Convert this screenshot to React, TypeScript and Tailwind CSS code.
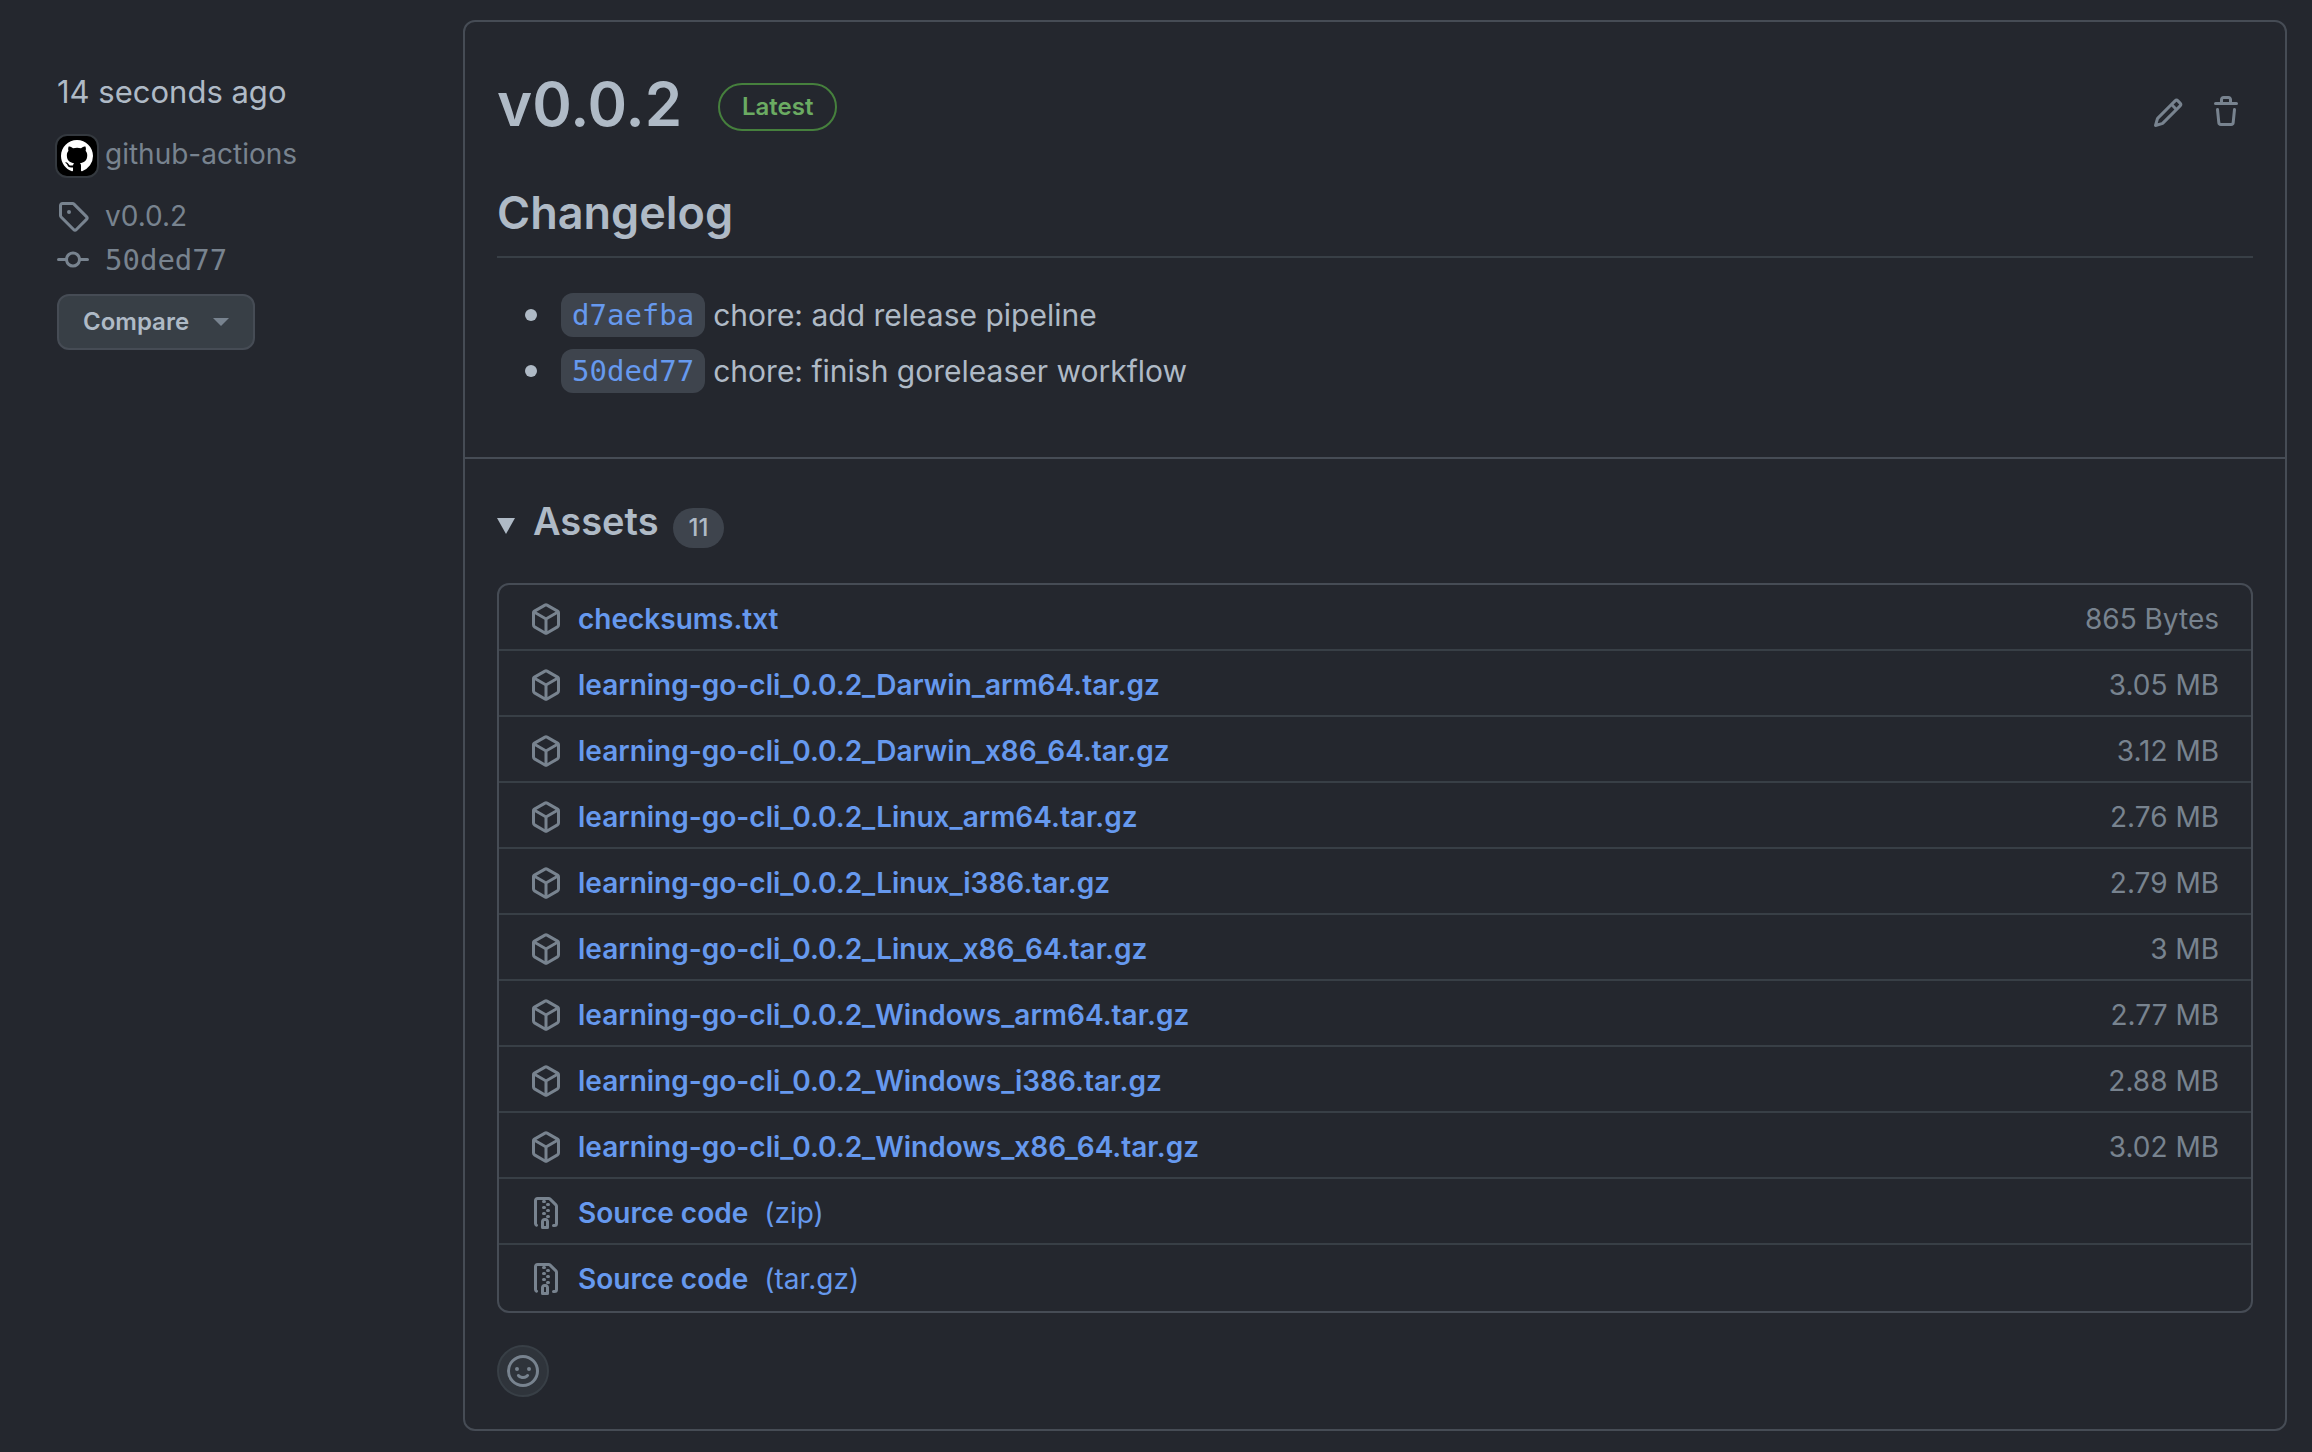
import type { ReactNode } from "react";

const icons = {
  tag: "M1 7.775V2.75C1 1.784 1.784 1 2.75 1h5.025c.464 0 .91.184 1.238.513l6.25 6.25a1.75 1.75 0 0 1 0 2.474l-5.026 5.026a1.75 1.75 0 0 1-2.474 0l-6.25-6.25A1.752 1.752 0 0 1 1 7.775Zm1.5 0c0 .066.026.13.073.177l6.25 6.25a.25.25 0 0 0 .354 0l5.025-5.025a.25.25 0 0 0 0-.354l-6.25-6.25a.25.25 0 0 0-.177-.073H2.75a.25.25 0 0 0-.25.25ZM6 5a1 1 0 1 1 0 2 1 1 0 0 1 0-2Z",
  commit:
    "M11.93 8.5a4.002 4.002 0 0 1-7.86 0H.75a.75.75 0 0 1 0-1.5h3.32a4.002 4.002 0 0 1 7.86 0h3.32a.75.75 0 0 1 0 1.5Zm-1.43-.75a2.5 2.5 0 1 0-5 0 2.5 2.5 0 0 0 5 0Z",
  pencil:
    "M11.013 1.427a1.75 1.75 0 0 1 2.474 0l1.086 1.086a1.75 1.75 0 0 1 0 2.474l-8.61 8.61c-.21.21-.47.364-.756.445l-3.251.93a.75.75 0 0 1-.927-.928l.929-3.25c.081-.286.235-.547.445-.758l8.61-8.61Zm.176 4.823L9.75 4.81l-6.286 6.287a.253.253 0 0 0-.064.108l-.558 1.953 1.953-.558a.253.253 0 0 0 .108-.064Zm1.238-3.763a.25.25 0 0 0-.354 0L10.811 3.75l1.439 1.44 1.263-1.263a.25.25 0 0 0 0-.354Z",
  trash:
    "M11 1.75V3h2.25a.75.75 0 0 1 0 1.5H2.75a.75.75 0 0 1 0-1.5H5V1.75C5 .784 5.784 0 6.75 0h2.5C10.216 0 11 .784 11 1.75ZM4.496 6.675l.66 6.6a.25.25 0 0 0 .249.225h5.19a.25.25 0 0 0 .249-.225l.66-6.6a.75.75 0 0 1 1.492.149l-.66 6.6A1.748 1.748 0 0 1 10.595 15h-5.19a1.75 1.75 0 0 1-1.741-1.575l-.66-6.6a.75.75 0 1 1 1.492-.15ZM6.5 1.75V3h3V1.75a.25.25 0 0 0-.25-.25h-2.5a.25.25 0 0 0-.25.25Z",
  package:
    "m8.878.392 5.25 3.045c.54.314.872.89.872 1.514v6.098a1.75 1.75 0 0 1-.872 1.514l-5.25 3.045a1.75 1.75 0 0 1-1.756 0l-5.25-3.045A1.75 1.75 0 0 1 1 11.049V4.951c0-.624.332-1.201.872-1.514L7.122.392a1.75 1.75 0 0 1 1.756 0ZM7.875 1.69l-4.63 2.685L8 7.133l4.755-2.758-4.63-2.685a.248.248 0 0 0-.25 0ZM2.5 5.677v5.372c0 .09.047.171.125.216l4.625 2.683V8.432Zm6.25 8.271 4.625-2.683a.25.25 0 0 0 .125-.216V5.677L8.75 8.432Z",
  zip: "M3.5 1.75v11.5c0 .09.048.173.126.217a.75.75 0 0 1-.752 1.298A1.748 1.748 0 0 1 2 13.25V1.75C2 .784 2.784 0 3.75 0h5.586c.464 0 .909.185 1.237.513l2.914 2.914c.329.328.513.773.513 1.237v8.586A1.75 1.75 0 0 1 12.25 15h-.5a.75.75 0 0 1 0-1.5h.5a.25.25 0 0 0 .25-.25V4.664a.25.25 0 0 0-.073-.177L9.513 1.573a.25.25 0 0 0-.177-.073H7.25a.75.75 0 0 1 0 1.5h-.5a.75.75 0 0 1 0-1.5h-3a.25.25 0 0 0-.25.25Zm3.75 8.75h.5c.966 0 1.75.784 1.75 1.75v3a.75.75 0 0 1-.75.75h-2.5a.75.75 0 0 1-.75-.75v-3c0-.966.784-1.75 1.75-1.75ZM6 5.25a.75.75 0 0 1 .75-.75h.5a.75.75 0 0 1 0 1.5h-.5A.75.75 0 0 1 6 5.25Zm.75 2.25h.5a.75.75 0 0 1 0 1.5h-.5a.75.75 0 0 1 0-1.5ZM8 6.75A.75.75 0 0 1 8.75 6h.5a.75.75 0 0 1 0 1.5h-.5A.75.75 0 0 1 8 6.75ZM8.75 3h.5a.75.75 0 0 1 0 1.5h-.5a.75.75 0 0 1 0-1.5ZM8 9.75A.75.75 0 0 1 8.75 9h.5a.75.75 0 0 1 0 1.5h-.5A.75.75 0 0 1 8 9.75Zm-1 2.5v2.25h1v-2.25a.25.25 0 0 0-.25-.25h-.5a.25.25 0 0 0-.25.25Z",
  smiley:
    "M8 0a8 8 0 1 1 0 16A8 8 0 0 1 8 0ZM1.5 8a6.5 6.5 0 1 0 13 0 6.5 6.5 0 0 0-13 0Zm3.82 1.636a.75.75 0 0 1 1.038.175l.007.009c.103.118.22.222.35.31.264.178.683.37 1.285.37.602 0 1.02-.192 1.285-.371.13-.088.247-.192.35-.31l.007-.008a.75.75 0 0 1 1.222.87c-.2.27-.44.49-.72.67-.63.418-1.37.638-2.144.629-.946 0-1.652-.308-2.126-.63a3.331 3.331 0 0 1-.715-.657.75.75 0 0 1 .161-1.087ZM12 7a1 1 0 1 1-2 0 1 1 0 0 1 2 0ZM5 8a1 1 0 1 1 0-2 1 1 0 0 1 0 2Z",
  github:
    "M8 0C3.58 0 0 3.58 0 8c0 3.54 2.29 6.53 5.47 7.59.4.07.55-.17.55-.38 0-.19-.01-.82-.01-1.49-2.01.37-2.53-.49-2.69-.94-.09-.23-.48-.94-.82-1.13-.28-.15-.68-.52-.01-.53.63-.01 1.08.58 1.23.82.72 1.21 1.87.87 2.33.66.07-.52.28-.87.51-1.07-1.78-.2-3.64-.89-3.64-3.95 0-.87.31-1.59.82-2.15-.08-.2-.36-1.02.08-2.12 0 0 .67-.21 2.2.82.64-.18 1.32-.27 2-.27.68 0 1.36.09 2 .27 1.53-1.04 2.2-.82 2.2-.82.44 1.1.16 1.92.08 2.12.51.56.82 1.27.82 2.15 0 3.07-1.87 3.75-3.65 3.95.29.25.54.73.54 1.48 0 1.07-.01 1.93-.01 2.2 0 .21.15.46.55.38A8.013 8.013 0 0 0 16 8c0-4.42-3.58-8-8-8z",
};

function Icon({ name, className = "size-8" }: { name: keyof typeof icons; className?: string }) {
  return (
    <svg viewBox="0 0 16 16" fill="currentColor" aria-hidden="true" className={`shrink-0 ${className}`}>
      <path d={icons[name]} />
    </svg>
  );
}

const commits = [
  { sha: "d7aefba", message: "chore: add release pipeline" },
  { sha: "50ded77", message: "chore: finish goreleaser workflow" },
];

type Asset = { name: string; size?: string; format?: string };

const assets: Asset[] = [
  { name: "checksums.txt", size: "865 Bytes" },
  { name: "learning-go-cli_0.0.2_Darwin_arm64.tar.gz", size: "3.05 MB" },
  { name: "learning-go-cli_0.0.2_Darwin_x86_64.tar.gz", size: "3.12 MB" },
  { name: "learning-go-cli_0.0.2_Linux_arm64.tar.gz", size: "2.76 MB" },
  { name: "learning-go-cli_0.0.2_Linux_i386.tar.gz", size: "2.79 MB" },
  { name: "learning-go-cli_0.0.2_Linux_x86_64.tar.gz", size: "3 MB" },
  { name: "learning-go-cli_0.0.2_Windows_arm64.tar.gz", size: "2.77 MB" },
  { name: "learning-go-cli_0.0.2_Windows_i386.tar.gz", size: "2.88 MB" },
  { name: "learning-go-cli_0.0.2_Windows_x86_64.tar.gz", size: "3.02 MB" },
  { name: "Source code", format: "(zip)" },
  { name: "Source code", format: "(tar.gz)" },
];

function MetaLink({ icon, children }: { icon: keyof typeof icons; children: ReactNode }) {
  return (
    <a href="#" className="flex h-11 items-center gap-4 text-[28px] leading-10">
      <Icon name={icon} />
      {children}
    </a>
  );
}

function Sidebar() {
  return (
    <aside className="flex w-[406px] shrink-0 flex-col items-start pt-12 text-[#78838f]">
      <p className="text-[31px] leading-12 text-[#afbac6]">14 seconds ago</p>
      <a href="#" className="mt-[18px] mb-4 -ml-0.5 flex items-start gap-1.5 text-[28px] leading-10">
        <span className="grid size-11 place-items-center rounded-xl border-2 border-[#34393f] bg-black text-white">
          <Icon name="github" />
        </span>
        github-actions
      </a>
      <MetaLink icon="tag">v0.0.2</MetaLink>
      <MetaLink icon="commit">
        <span className="font-['DejaVu_Sans_Mono',monospace] text-[29px]">50ded77</span>
      </MetaLink>
      <button
        type="button"
        className="mt-3 flex h-14 items-center gap-6 rounded-xl border-2 border-[#464c55] bg-[#383f46] px-6 text-2xl font-semibold text-[#afbac6]"
      >
        Compare
        <svg viewBox="0 0 16 8" aria-hidden="true" className="h-2 w-4 fill-[#78838f]">
          <path d="M0 0h16L8 8z" />
        </svg>
      </button>
    </aside>
  );
}

function AssetRow({ asset }: { asset: Asset }) {
  return (
    <li className="flex h-[66px] items-center border-b-2 border-[#383f46] pt-1 pr-8 pl-[31px] text-[28px] leading-10 last:border-b-0 last:pt-0.5">
      <Icon name={asset.format ? "zip" : "package"} className="size-8 text-[#78838f]" />
      <a href="#" className="ml-4 text-[#6699ee]">
        <span className="font-semibold">{asset.name}</span>
        {asset.format && <span className="ml-4">{asset.format}</span>}
      </a>
      {asset.size && <span className="ml-auto text-[#78838f]">{asset.size}</span>}
    </li>
  );
}

export default function App() {
  return (
    <div className="flex min-h-screen items-start bg-[#24272e] py-5 pr-[25px] pl-[57px] font-['Inter',sans-serif] text-[#afbac6]">
      <Sidebar />
      <main className="min-w-0 flex-1 rounded-xl border-2 border-[#464c55]">
        <section className="px-8 pt-10 pb-[54px]">
          <header className="flex items-center">
            <h1 className="text-[60px] leading-21 font-semibold">v0.0.2</h1>
            <span className="mt-1.5 ml-9 flex h-12 items-center rounded-full border-2 border-[#46803d] px-5.5 text-2xl font-semibold text-[#6bab62]">
              Latest
            </span>
            <div className="mt-4 ml-auto flex items-center gap-[26px] pr-[11px] text-[#78838f]">
              <button type="button" aria-label="Edit release" className="pt-0.5">
                <Icon name="pencil" />
              </button>
              <button type="button" aria-label="Delete release">
                <Icon name="trash" />
              </button>
            </div>
          </header>
          <h2 className="mt-[37px] border-b-2 border-[#383f46] pb-[13px] text-[45px] leading-15 font-semibold">Changelog</h2>
          <ul className="mt-[33px] text-[30px] leading-12">
            {commits.map((commit) => (
              <li key={commit.sha} className="mb-2 flex items-center pl-7">
                <span className="mr-6 size-3 rounded-full bg-[#afbac6]" />
                <a
                  href="#"
                  className="mr-2 rounded-xl bg-[#3e444d] px-[11px] font-['DejaVu_Sans_Mono',monospace] text-[29px] leading-11 text-[#6699ee]"
                >
                  {commit.sha}
                </a>
                {commit.message}
              </li>
            ))}
          </ul>
        </section>
        <section className="border-t-2 border-[#464c55] p-8">
          <details open>
            <summary className="flex h-16 list-none items-center">
              <svg viewBox="0 0 18 16" aria-hidden="true" className="mt-1.5 h-4 w-[18px] fill-current">
                <path d="M0 0h18L9 16z" />
              </svg>
              <h3 className="mb-1 ml-[18px] text-[38px] leading-15 font-semibold">Assets</h3>
              <span className="mt-2.5 ml-3.5 flex h-10 items-center rounded-full bg-[#3e444d] px-4 text-2xl font-medium">11</span>
            </summary>
            <ul className="mt-7 rounded-xl border-2 border-[#464c55]">
              {assets.map((asset) => (
                <AssetRow key={asset.name + (asset.format ?? "")} asset={asset} />
              ))}
            </ul>
          </details>
          <button
            type="button"
            aria-label="Add a reaction"
            className="mt-8 grid size-13 place-items-center rounded-full border-2 border-[#383f46] bg-[#2f343b] text-[#78838f]"
          >
            <Icon name="smiley" />
          </button>
        </section>
      </main>
    </div>
  );
}
